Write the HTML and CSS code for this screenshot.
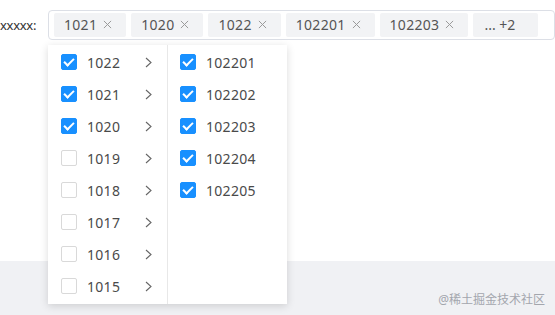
FILE: index.html
```html
<!DOCTYPE html>
<html lang="en">
<head>
  <meta charset="UTF-8">
  <title>Cascader</title>
  <link rel="stylesheet" href="styles.css">
</head>
<body>
  <div class="page">
    <div class="field">
      <span class="label">xxxxx:</span>
      <div class="select">
        <span class="tag">1021<svg class="close" viewBox="0 0 10 10"><path d="M1 1L9 9M9 1L1 9"/></svg></span>
        <span class="tag">1020<svg class="close" viewBox="0 0 10 10"><path d="M1 1L9 9M9 1L1 9"/></svg></span>
        <span class="tag">1022<svg class="close" viewBox="0 0 10 10"><path d="M1 1L9 9M9 1L1 9"/></svg></span>
        <span class="tag">102201<svg class="close" viewBox="0 0 10 10"><path d="M1 1L9 9M9 1L1 9"/></svg></span>
        <span class="tag">102203<svg class="close" viewBox="0 0 10 10"><path d="M1 1L9 9M9 1L1 9"/></svg></span>
        <span class="tag more">... +2</span>
      </div>
    </div>

    <!-- cascader dropdown -->
    <div class="dropdown">
      <ul class="menu first">
        <li><span class="box on"></span><span class="text">1022</span><svg class="arrow" viewBox="0 0 7 11"><path d="M1 1L6 5.5L1 10"/></svg></li>
        <li><span class="box on"></span><span class="text">1021</span><svg class="arrow" viewBox="0 0 7 11"><path d="M1 1L6 5.5L1 10"/></svg></li>
        <li><span class="box on"></span><span class="text">1020</span><svg class="arrow" viewBox="0 0 7 11"><path d="M1 1L6 5.5L1 10"/></svg></li>
        <li><span class="box"></span><span class="text">1019</span><svg class="arrow" viewBox="0 0 7 11"><path d="M1 1L6 5.5L1 10"/></svg></li>
        <li><span class="box"></span><span class="text">1018</span><svg class="arrow" viewBox="0 0 7 11"><path d="M1 1L6 5.5L1 10"/></svg></li>
        <li><span class="box"></span><span class="text">1017</span><svg class="arrow" viewBox="0 0 7 11"><path d="M1 1L6 5.5L1 10"/></svg></li>
        <li><span class="box"></span><span class="text">1016</span><svg class="arrow" viewBox="0 0 7 11"><path d="M1 1L6 5.5L1 10"/></svg></li>
        <li><span class="box"></span><span class="text">1015</span><svg class="arrow" viewBox="0 0 7 11"><path d="M1 1L6 5.5L1 10"/></svg></li>
      </ul>
      <ul class="menu second">
        <li><span class="box on"></span><span class="text">102201</span></li>
        <li><span class="box on"></span><span class="text">102202</span></li>
        <li><span class="box on"></span><span class="text">102203</span></li>
        <li><span class="box on"></span><span class="text">102204</span></li>
        <li><span class="box on"></span><span class="text">102205</span></li>
      </ul>
    </div>

    <div class="footer">
      <span class="mark">@稀土掘金技术社区</span>
    </div>
  </div>
</body>
</html>
```

FILE: styles.css
```css
body {
  margin: 0;
  font-family: "Noto Sans", "Noto Sans CJK SC", sans-serif;
  font-size: 14px;
  color: #4a4a4a;
  background: #fff;
}

.page {
  position: relative;
  width: 555px;
  height: 315px;
  overflow: hidden;
}

.field {
  display: flex;
  align-items: center;
  height: 31px;
  padding-top: 9px;
}

.label {
  width: 48px;
  color: #333;
  font-size: 13px;
  letter-spacing: -0.3px;
}

.select {
  display: flex;
  align-items: center;
  gap: 5px;
  width: 495px;
  height: 28px;
  padding: 0 5px;
  border: 1px solid #dcdfe6;
  border-radius: 4px;
}

.tag {
  display: flex;
  align-items: center;
  height: 24px;
  padding: 0 14px 0 10px;
  background: #f2f3f5;
  border-radius: 2px;
  color: #555;
  letter-spacing: 0.3px;
  white-space: pre;
}

.tag.more {
  padding: 0 23px 0 11px;
  letter-spacing: 0;
}

.close {
  width: 9px;
  height: 9px;
  margin-left: 6px;
  fill: none;
  stroke: #999;
  stroke-width: 1.1;
}

.dropdown {
  position: absolute;
  left: 48px;
  top: 45px;
  display: flex;
  background: #fff;
  box-shadow: 0 2px 8px rgba(0, 0, 0, 0.15);
  z-index: 2;
}

.menu {
  list-style: none;
  margin: 0;
  padding: 0;
  width: 119px;
  height: 259px;
  letter-spacing: 0.3px;
}

.menu.first {
  border-right: 1px solid #e8e8e8;
}

.menu li {
  display: flex;
  align-items: center;
  height: 32px;
  padding-left: 13px;
}

.menu li:first-child {
  margin-top: 1px;
}

.box {
  box-sizing: border-box;
  width: 16px;
  height: 16px;
  border: 1px solid #d9d9d9;
  border-radius: 2px;
  margin-right: 10px;
  position: relative;
}

.box.on {
  background: #1890ff;
  border-color: #1890ff;
}

.box.on::after {
  content: "";
  position: absolute;
  left: 4px;
  top: 1px;
  width: 4px;
  height: 8px;
  border: solid #fff;
  border-width: 0 2px 2px 0;
  transform: rotate(45deg);
}

.text {
  flex: 1;
}

.arrow {
  width: 7px;
  height: 11px;
  margin-right: 15px;
  fill: none;
  stroke: #666;
  stroke-width: 1.1;
}

.menu.second li {
  padding-left: 12px;
}

.footer {
  position: absolute;
  left: 0;
  right: 0;
  top: 261px;
  bottom: 0;
  background: #f0f1f4;
}

.mark {
  position: absolute;
  right: 10px;
  top: 29px;
  font-size: 12px;
  color: #a3a6ad;
}
```
